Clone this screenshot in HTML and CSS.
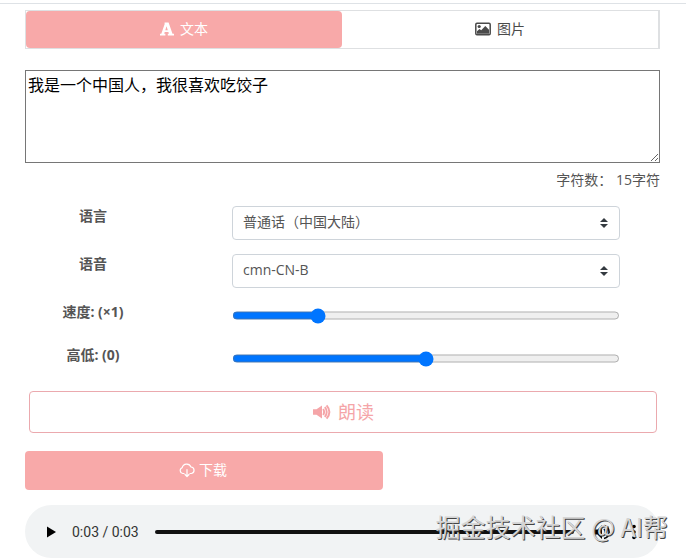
FILE: index.html
```html
<!DOCTYPE html>
<html lang="zh-CN">
<head>
    <meta charset="UTF-8">
    <meta name="viewport" content="width=device-width, initial-scale=1.0">
    <title>文字转语音</title>
    <link rel="stylesheet" href="styles.css">
</head>
<body>
    <main class="page">
        <div class="tabs">
            <button type="button" class="tab active">
                <svg width="14" height="14" viewBox="0 0 14 14" fill="currentColor">
                    <path fill-rule="evenodd" d="M4.600.5h4l3.900 11.200H14v1.800H7.800v-1.800h1.100l-.5-1.600H4.700l-.5 1.600h1.200v1.800H0v-1.800h1.300L4.600 2.300zM5.300 8.300h2.500L6.500 4.200z"/>
                </svg>
                文本
            </button>
            <button type="button" class="tab">
                <svg width="16" height="14" viewBox="0 0 16 14">
                    <rect x="0.8" y="1.300" width="14.400" height="11.400" rx="1.200" fill="none" stroke="currentColor" stroke-width="1.500"/>
                    <circle cx="4.200" cy="4.500" r="1.600" fill="currentColor"/>
                    <path fill="currentColor" d="M2 11.800V9.300l2.500-2.300 1.700 1.300L10.300 4l3.700 3.700v4.100z"/>
                </svg>
                图片
            </button>
        </div>

        <textarea class="source" aria-label="文本">我是一个中国人，我很喜欢吃饺子</textarea>
        <p class="count">字符数： 15字符</p>

        <form class="options">
            <label for="language">语言</label>
            <select id="language" class="select">
                <option>普通话（中国大陆）</option>
            </select>

            <label for="voice">语音</label>
            <select id="voice" class="select">
                <option>cmn-CN-B</option>
            </select>

            <label for="speed">速度: (×1)</label>
            <input id="speed" class="slider" type="range" min="0.2" max="4" step="0.1" value="1">

            <label for="pitch">高低: (0)</label>
            <input id="pitch" class="slider" type="range" min="-20" max="20" value="0">
        </form>

        <button type="button" class="btn btn-read">
            <svg width="20" height="18" viewBox="0 0 20 18">
                <path fill="currentColor" d="M1 6.300h3.500L10 2.500v13l-5.500-3.800H1z"/>
                <path fill="none" stroke="currentColor" stroke-width="1.900" d="M11.200 6q1.800 3 0 6M12.900 4q3.600 5 0 10M14.600 2.400q5.600 6.600 0 13.200"/>
            </svg>
            朗读
        </button>

        <button type="button" class="btn btn-download">
            <svg width="16" height="16" viewBox="0 0 16 16" fill="none" stroke="currentColor" stroke-width="1.200" stroke-linecap="round" stroke-linejoin="round">
                <path d="M5 11.500H3.800A3 3 0 0 1 3.200 5.700 4.600 4.600 0 0 1 12 5a3.300 3.300 0 0 1 .5 6.500H11"/>
                <path d="M8 7.500v7M6 12.500l2 2 2-2"/>
            </svg>
            下载
        </button>

        <div class="player">
            <button type="button" class="player-btn" aria-label="播放">
                <svg width="20" height="20" viewBox="0 0 20 20" fill="currentColor"><path d="M6 4.500v11l9-5.500z"/></svg>
            </button>
            <span class="time">0:03 / 0:03</span>
            <input class="seek" type="range" min="0" max="3" value="3" aria-label="进度">
            <button type="button" class="player-btn" aria-label="音量">
                <svg width="20" height="20" viewBox="0 0 20 20">
                    <path fill="currentColor" d="M2 7.500h3.500L10 3v14l-4.500-4.500H2z"/>
                    <path fill="none" stroke="currentColor" stroke-width="1.600" d="M12 7q2.600 3 0 6M12 3.500a6.700 6.700 0 0 1 0 13"/>
                </svg>
            </button>
            <button type="button" class="player-btn" aria-label="更多">
                <svg width="20" height="20" viewBox="0 0 20 20" fill="currentColor">
                    <circle cx="10" cy="4.500" r="1.800"/>
                    <circle cx="10" cy="10" r="1.800"/>
                    <circle cx="10" cy="15.500" r="1.800"/>
                </svg>
            </button>
            <span class="watermark">掘金技术社区 @ AI帮</span>
        </div>
    </main>
</body>
</html>
```

FILE: styles.css
```css
* {
    margin: 0;
    padding: 0;
    box-sizing: border-box;
}

body {
    font-family: 'Open Sans', 'Noto Sans CJK SC', sans-serif;
    font-size: 14px;
    line-height: 20px;
    color: #555;
    background: #fff;
    padding-top: 3px;
    overflow-x: hidden;
}

button,
select,
textarea {
    font: inherit;
    color: inherit;
}

button {
    border: none;
    background: none;
    cursor: pointer;
}

.page {
    border-top: 1px solid #dee2e6;
    padding: 6px 26px 0 25px;
}

/* Tabs */
.tabs {
    display: flex;
    border: 1px solid #dee0e2;
    border-right-width: 2px;
}

.tab {
    flex: 1;
    display: flex;
    align-items: center;
    justify-content: center;
    gap: 6px;
    height: 37px;
    padding-bottom: 2px;
    color: #4a4a4a;
}

.tab.active {
    background: #f8a9a9;
    color: #fff;
    border-radius: 4px;
}

/* Text input */
.source {
    display: block;
    width: 100%;
    height: 93px;
    margin-top: 21px;
    padding: 2px;
    border: 1px solid #767676;
    font-size: 16px;
    line-height: 24px;
    color: #000;
    resize: vertical;
}

.count {
    margin-top: 7px;
    text-align: right;
}

/* Voice options */
.options {
    display: grid;
    grid-template-columns: 136px 1fr;
    align-items: start;
    column-gap: 71px;
    row-gap: 14px;
    margin-top: 16px;
    padding-right: 40px;
}

.options label {
    min-height: 29px;
    font-weight: 700;
    text-align: center;
}

.select {
    width: 100%;
    height: 34px;
    padding: 0 28px 2px 10px;
    border: 1px solid #ced4da;
    border-radius: 4px;
    appearance: none;
    background: #fff url("data:image/svg+xml,%3Csvg xmlns='http://www.w3.org/2000/svg' viewBox='0 0 4 5'%3E%3Cpath fill='%23343a40' d='M2 0L0 2h4zm0 5L0 3h4z'/%3E%3C/svg%3E") no-repeat right 11px center / 8px 10px;
}

.slider {
    width: 100%;
    height: 27px;
}

/* Buttons */
.btn {
    display: flex;
    align-items: center;
    justify-content: center;
    border-radius: 4px;
}

.btn-read {
    width: calc(100% - 7px);
    height: 42px;
    margin: 17px 3px 0 4px;
    border: 1px solid #eba9ae;
    gap: 6px;
    font-size: 18px;
    color: #f5a5a8;
}

.btn-download {
    width: 56.4%;
    height: 39px;
    margin-top: 18px;
    padding: 0 2px 2px 0;
    background: #f8a9a9;
    gap: 4px;
    color: #fff;
}

/* Audio player */
.player {
    position: relative;
    display: flex;
    align-items: center;
    height: 53px;
    margin-top: 15px;
    padding: 0 16px;
    border-radius: 27px;
    background: #f1f3f4;
    color: #000;
}

.player-btn {
    width: 20px;
    height: 20px;
}

.player-btn + .player-btn {
    margin-left: 12px;
}

.time {
    margin-left: 11px;
    font-family: Roboto, sans-serif;
    color: #333;
}

.seek {
    flex: 1;
    min-width: 0;
    height: 4px;
    margin: 0 18px 0 16px;
    border-radius: 2px;
    appearance: none;
    background: #111;
}

.seek::-webkit-slider-thumb {
    appearance: none;
    width: 0;
    height: 0;
}

.watermark {
    position: absolute;
    top: 3px;
    right: -8px;
    font-family: 'Noto Sans CJK SC', sans-serif;
    font-size: 25px;
    line-height: 36px;
    white-space: nowrap;
    color: #d4d4d4;
    text-shadow: 1px 1px 0 #444;
    pointer-events: none;
}
```
